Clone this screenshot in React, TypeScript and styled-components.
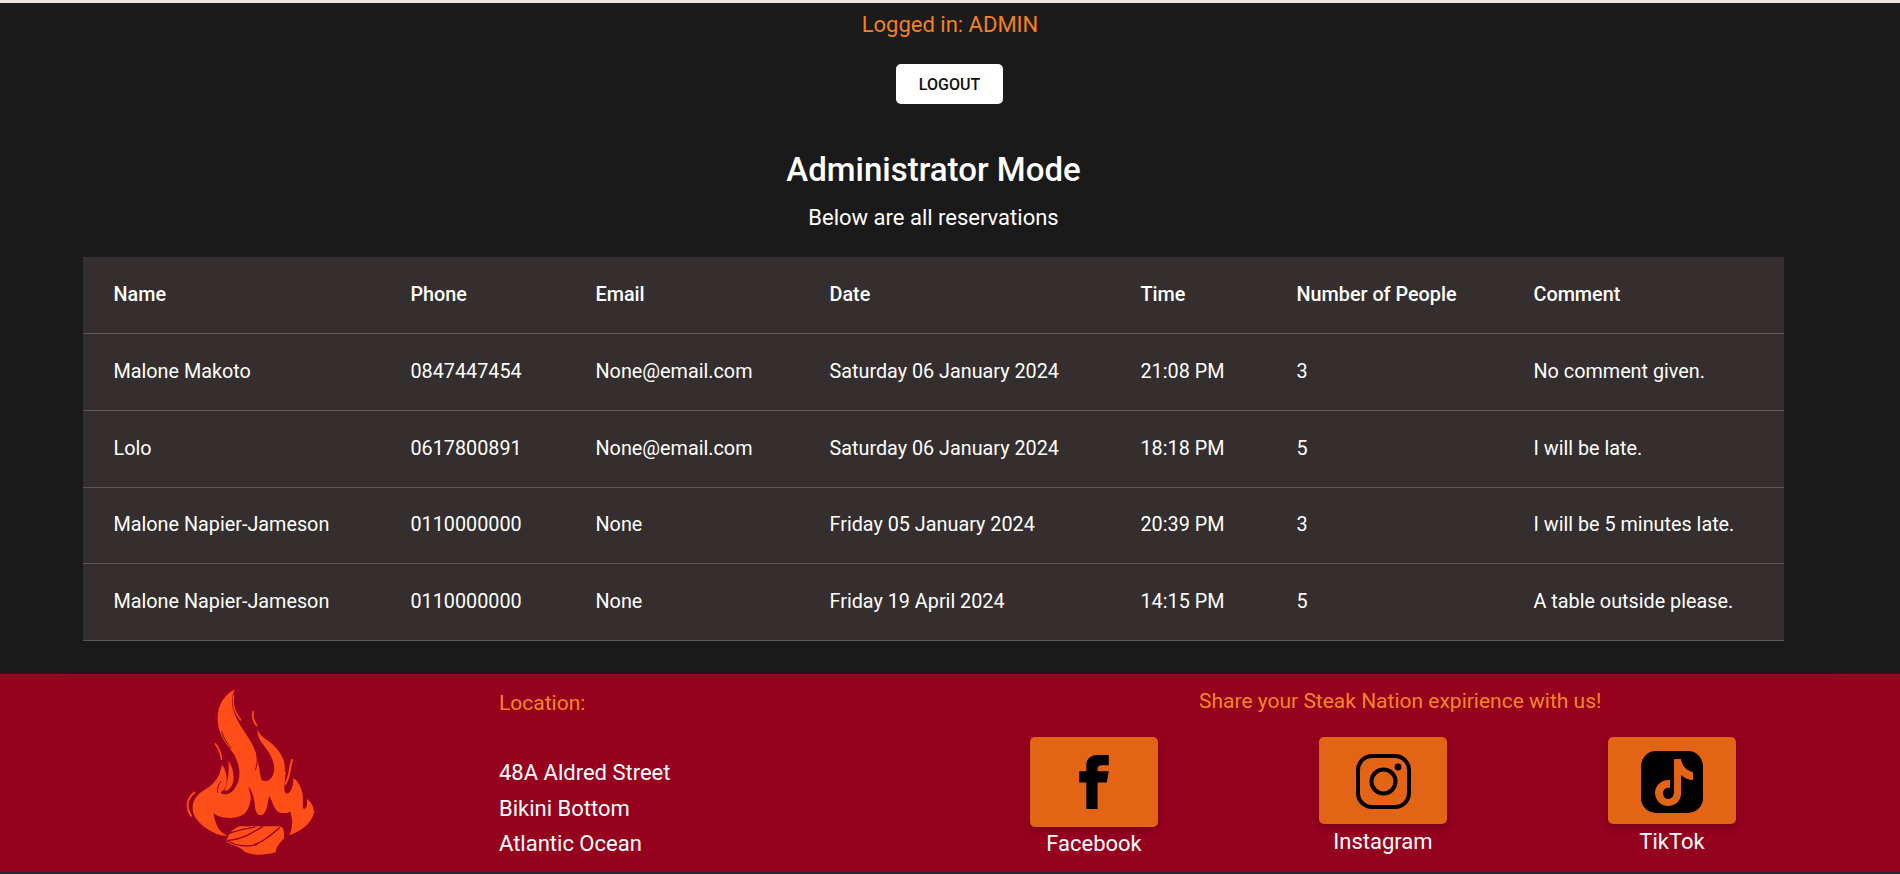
import React from 'react'
import styled, { createGlobalStyle } from 'styled-components'

const GlobalStyle = createGlobalStyle`
	html, body { margin: 0; padding: 0; background: #1b1b1b; }
	body { font-family: Roboto, "Liberation Sans", sans-serif; color: #fff; }
`;

const Page = styled.div`
	display: flex;
	flex-direction: column;
	height: 874px;
	overflow: hidden;
	border-top: 3px solid #eee5dc;
	box-sizing: border-box;
`;
const Main = styled.main`
	flex: 1;
	display: flex;
	flex-direction: column;
	align-items: center;
	min-height: 0;
`;
const LoggedIn = styled.div`
	margin-top: 9px;
	font-size: 22px;
	line-height: 26px;
	color: #f5801f;
`;
const LogoutButton = styled.button`
	margin: 26px 1px 0 0;
	width: 107px;
	height: 40px;
	background: #fff;
	color: #111;
	border: none;
	border-radius: 5px;
	font: 500 16px Roboto, sans-serif;
	text-transform: uppercase;
`;
const Panel = styled.section`
	flex: 1;
	align-self: stretch;
	margin: 43px 67px 0 65px;
	padding: 0 49px 0 18px;
	display: flex;
	flex-direction: column;
	align-items: center;
	background: #1a1a1a;
`;
const Heading = styled.h2`
	margin: 1px 0 0;
	font-size: 33px;
	line-height: 44px;
	font-weight: 500;
`;
const SubHeading = styled.p`
	margin: 13px 0 0;
	font-size: 22px;
	line-height: 26px;
`;
const Table = styled.table`
	margin-top: 26px;
	width: 100%;
	table-layout: fixed;
	border-collapse: collapse;
	background: #342e2e;
	font-size: 19.8px;
`;
const Th = styled.th`
	height: 76.7px;
	padding: 0 0 1px 30.5px;
	text-align: left;
	font-weight: 500;
	border-bottom: 1px solid #5c5757;
	box-sizing: border-box;
`;
const Td = styled.td`
	height: 76.7px;
	padding: 0 0 1px 30.5px;
	border-bottom: 1px solid #5c5757;
	box-sizing: border-box;
	white-space: nowrap;
`;
const Footer = styled.footer`
	height: 198px;
	flex: none;
	background: #96011e;
	display: grid;
	grid-template-columns: 499px 460px 1fr;
`;
const LogoCell = styled.div`
	display: flex;
	justify-content: center;
	align-items: flex-start;
	padding: 15px 0 0 0;
`;
const Address = styled.div`
	padding-top: 16px;
	font-size: 22px;
	line-height: 35.5px;
`;
const Accent = styled.div`
	color: #f5861f;
	font-size: 21px;
	line-height: 26px;
	margin-bottom: 39px;
`;
const Share = styled.div`
	padding-top: 14px;
	display: flex;
	flex-direction: column;
`;
const ShareTitle = styled.div`
	color: #f5861f;
	font-size: 21px;
	line-height: 26px;
	padding-left: 240px;
`;
const Socials = styled.div`
	margin-top: 23px;
	display: grid;
	grid-template-columns: repeat(3, 128px);
	column-gap: 161px;
	margin-left: 71px;
`;
const Social = styled.a`
	display: flex;
	flex-direction: column;
	align-items: center;
	font-size: 22px;
	color: #fff;
`;
const IconTile = styled.div<{ $tall?: boolean }>`
	width: 128px;
	height: ${({ $tall }) => $tall ? 90 : 87}px;
	box-sizing: border-box;
	padding-top: ${({ $tall }) => $tall ? 0 : 2}px;
	background: #e36414;
	border-radius: 5px;
	display: flex;
	align-items: center;
	justify-content: center;
	box-shadow: 0 4px 8px rgba(0,0,0,.2);
	margin-bottom: ${({ $tall }) => $tall ? 4 : 5}px;
`;
const Strip = styled.div`
	height: 2px;
	flex: none;
	background: #1f2a36;
`;

const rows = [
	['Malone Makoto', '0847447454', 'None@email.com', 'Saturday 06 January 2024', '21:08 PM', '3', 'No comment given.'],
	['Lolo', '0617800891', 'None@email.com', 'Saturday 06 January 2024', '18:18 PM', '5', 'I will be late.'],
	['Malone Napier-Jameson', '0110000000', 'None', 'Friday 05 January 2024', '20:39 PM', '3', 'I will be 5 minutes late.'],
	['Malone Napier-Jameson', '0110000000', 'None', 'Friday 19 April 2024', '14:15 PM', '5', 'A table outside please.'],
];
const headers = ['Name', 'Phone', 'Email', 'Date', 'Time', 'Number of People', 'Comment'];
const widths = [297, 185, 234, 311, 156, 237, 281];

const FLAME = '#ff4e17';
const BG = '#96011e';

const FlameLogo = () => (
	<svg width="128" height="167" viewBox="165 58 385 500">
		<path fill={FLAME} d="M312 58C285 70 260 100 260 145C260 185 280 215 300 240C325 270 335 320 315 350C305 372 280 380 268 368C285 360 292 335 285 310C282 298 278 290 273 285C268 315 255 340 225 358C195 375 183 395 185 420C188 450 225 485 280 500C262 480 250 455 248 430C270 450 320 450 345 428C365 405 362 375 352 350C362 360 372 385 372 410C374 430 385 440 395 435C408 430 410 400 415 378C425 395 430 420 445 428C460 432 470 430 478 425C488 450 485 480 475 497C510 485 540 465 550 430C550 410 540 395 528 388C530 400 530 415 520 418C512 412 520 395 515 370C510 345 498 330 488 325C488 345 482 370 468 372C458 370 460 345 465 310C468 265 440 235 415 215C400 205 385 195 380 178C378 200 390 215 405 235C425 260 432 285 430 305C425 330 405 340 392 330C385 310 385 270 370 235C355 200 330 175 315 140C300 110 300 80 312 58Z" />
		<path fill={FLAME} d="M287 518C288 500 300 480 325 470L440 470C452 470 460 475 460 490L460 505C450 520 436 525 435 548C400 558 360 558 340 545C325 530 300 525 287 518Z" />
		<path fill={FLAME} d="M292 272C308 295 315 330 300 352C292 362 284 364 280 362C290 345 296 305 292 272Z" />
		<g fill="none" stroke={FLAME} strokeLinecap="round">
			<path strokeWidth="4" d="M308 78C304 105 312 130 330 150" />
			<path strokeWidth="5" d="M367 125C364 140 368 155 378 167" />
			<path strokeWidth="5" d="M253 222C262 232 270 250 272 268" />
			<path strokeWidth="6" d="M190 368C170 385 162 410 180 438" />
			<path strokeWidth="6" d="M484 270C476 290 480 315 464 342" />
			<path strokeWidth="4" d="M240 428C238 455 255 480 285 498" />
		</g>
		<g fill="none" stroke={BG} strokeLinecap="round">
			<path strokeWidth="3" d="M272 185C278 205 290 222 300 235" />
			<path strokeWidth="3" d="M378 255C381 272 379 285 374 300" />
			<path strokeWidth="3" d="M450 250C462 265 465 285 463 305" />
			<path strokeWidth="3" d="M360 395C356 420 340 442 322 452" />
			<path strokeWidth="4" d="M292 493C320 480 345 478 372 472" />
			<path strokeWidth="4" d="M292 512C330 510 362 492 396 470" />
			<path strokeWidth="4" d="M372 524C400 516 425 492 446 474" />
			<path strokeWidth="4" d="M290 514C320 530 350 532 378 525" />
			<path strokeWidth="3" d="M270 335C262 345 258 355 260 368" />
		</g>
	</svg>
);

const FacebookGlyph = () => (
	<svg width="30" height="54" viewBox="0 0 29 53">
		<path fill="#000" d="M7 53V27H0V16H7V10C7 3 12 0 18 0H29V10H23C19 10 18 11 18 15V16H29L27 27H18V53Z" />
	</svg>
);
const InstagramGlyph = () => (
	<svg width="55" height="55" viewBox="0 0 55 55" fill="none" stroke="#000" strokeWidth="4">
		<rect x="2" y="2" width="51" height="51" rx="14" />
		<circle cx="27.5" cy="27.5" r="12" />
		<circle cx="42" cy="13" r="3.4" fill="#000" stroke="none" />
	</svg>
);
const TiktokGlyph = () => (
	<svg width="62" height="62" viewBox="0 0 62 62">
		<rect width="62" height="62" rx="15" fill="#000" />
		<path fill="#e36414" d="M33 8h7c1 7 6 12 12 13v8c-4 0-9-2-12-5v19c0 7-6 12-13 12s-13-6-13-13c0-8 7-14 15-13v8c-4-1-7 2-7 5s2 6 5 6 6-3 6-6z" />
	</svg>
);

export default function App() {
	return (
		<Page>
			<GlobalStyle />
			<Main>
				<LoggedIn>Logged in: ADMIN</LoggedIn>
				<LogoutButton>Logout</LogoutButton>
				<Panel>
					<Heading>Administrator Mode</Heading>
					<SubHeading>Below are all reservations</SubHeading>
					<Table>
						<colgroup>
							{widths.map((w, i) => <col key={i} width={w} />)}
						</colgroup>
						<thead>
							<tr>{headers.map(h => <Th key={h}>{h}</Th>)}</tr>
						</thead>
						<tbody>
							{rows.map((r, i) => (
								<tr key={i}>{r.map((c, j) => <Td key={j}>{c}</Td>)}</tr>
							))}
						</tbody>
					</Table>
				</Panel>
			</Main>
			<Footer>
				<LogoCell><FlameLogo /></LogoCell>
				<Address>
					<Accent>Location:</Accent>
					<div>48A Aldred Street</div>
					<div>Bikini Bottom</div>
					<div>Atlantic Ocean</div>
				</Address>
				<Share>
					<ShareTitle>Share your Steak Nation expirience with us!</ShareTitle>
					<Socials>
						<Social><IconTile $tall><FacebookGlyph /></IconTile>Facebook</Social>
						<Social><IconTile><InstagramGlyph /></IconTile>Instagram</Social>
						<Social><IconTile><TiktokGlyph /></IconTile>TikTok</Social>
					</Socials>
				</Share>
			</Footer>
			<Strip />
		</Page>
	);
}
